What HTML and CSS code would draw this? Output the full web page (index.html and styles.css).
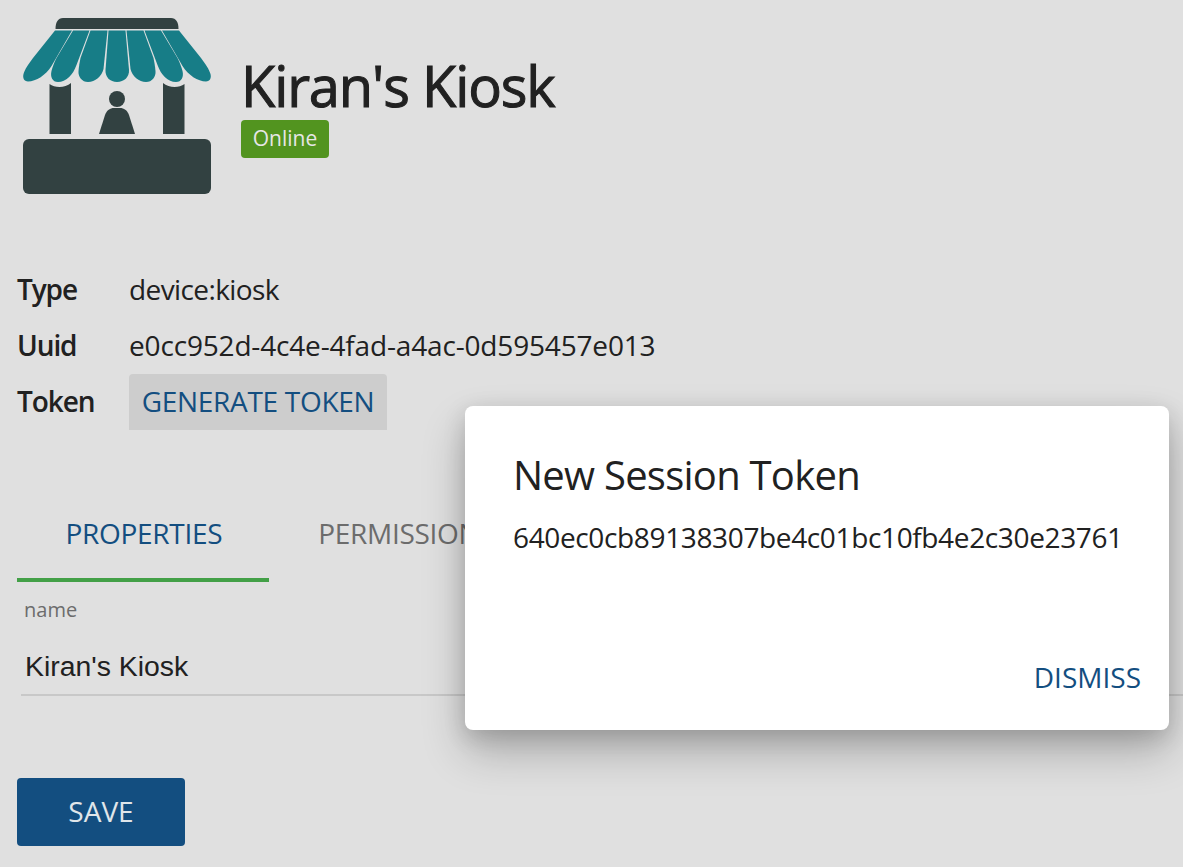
FILE: index.html
```html
<!DOCTYPE html>
<html lang="en">
<head>
  <meta charset="UTF-8">
  <meta name="viewport" content="width=device-width, initial-scale=1.0">
  <title>Kiran's Kiosk</title>
  <link rel="stylesheet" href="styles.css">
</head>
<body>

  <div class="page">
    <div class="head">
      <svg class="kiosk-icon" width="188" height="176" viewBox="23 18 188 176">
        <path class="dark" d="M55.5 29 C55.5 22 58 18 63 18 H171 C176 18 178.5 22 178.5 29 Z"/>
        <g class="teal">
          <g id="slats">
            <path d="M55 30.5 H72 L51.5 66 C46 75 36 81.5 28 81.5 C24 81.5 22.5 78 23.5 74 C25 69 28 65 33 58 Z"/>
            <path d="M73 30.5 H89.5 L76.5 65 C73 75 66 82 58 82 C52.5 82 50 77 51.5 71 C52.5 67 54 63 56.5 58 Z"/>
            <path d="M90.5 30.5 H107.5 L103.5 69 C102 76 95 82 88 82 C82 82 78 77 78.5 71 C79 66 79.5 63 80.5 58 Z"/>
          </g>
          <use href="#slats" transform="matrix(-1 0 0 1 234 0)"/>
          <path d="M108.5 30.5 H125.5 L129 70 C129.5 77 124 82 117 82 C110 82 105 77 105.5 70 Z"/>
        </g>
        <path class="dark" d="M49.5 84 C55 88 65 88 71 83 V134 H49.5 Z"/>
        <path class="dark" d="M163 83 C169 88 179 88 184.5 84 V134 H163 Z"/>
        <circle class="dark" cx="117" cy="99" r="8"/>
        <path class="dark" d="M99 134 L105 115 C107 110 110 108 114 108 H120 C124 108 127 110 129 115 L135 134 Z"/>
        <rect class="dark" x="23" y="139" width="188" height="55" rx="6"/>
      </svg>
      <div class="title-box">
        <h1 class="title">Kiran's Kiosk</h1>
        <span class="badge">Online</span>
      </div>
    </div>

    <div class="info">
      <div class="info-row"><span class="info-label">Type</span><span class="type-value">device:kiosk</span></div>
      <div class="info-row"><span class="info-label">Uuid</span><span class="uuid-value">e0cc952d-4c4e-4fad-a4ac-0d595457e013</span></div>
      <div class="info-row"><span class="info-label">Token</span><button class="btn-flat">GENERATE TOKEN</button></div>
    </div>

    <div class="tabs">
      <div class="tab tab-active">PROPERTIES</div>
      <div class="tab">PERMISSIONS</div>
    </div>

    <div class="field">
      <label class="field-label">name</label>
      <div class="field-input">Kiran's Kiosk</div>
    </div>

    <button class="btn-save">SAVE</button>
  </div>

  <div class="dialog">
    <h2 class="dialog-title">New Session Token</h2>
    <div class="dialog-text">640ec0cb89138307be4c01bc10fb4e2c30e23761</div>
    <div class="dialog-actions"><span class="dismiss">DISMISS</span></div>
  </div>

</body>
</html>
```

FILE: styles.css
```css
html, body {
  margin: 0;
  height: 100%;
  overflow: hidden;
}
body {
  background: #e0e0e0;
  color: #212121;
  font-family: "Open Sans", "Noto Sans", sans-serif;
  font-size: 28px;
}
button {
  font-family: inherit;
  border: 0;
}
.page {
  height: 867px;
  box-sizing: border-box;
  padding-top: 18px;
}

/* header */
.head {
  display: flex;
  align-items: flex-start;
  padding-left: 23px;
}
.kiosk-icon {
  display: block;
}
.kiosk-icon .dark {
  fill: #324141;
}
.kiosk-icon .teal {
  fill: #177d87;
}
.title-box {
  margin: 32px 0 0 30px;
}
.title {
  margin: 0;
  font-size: 56px;
  font-weight: 400;
  -webkit-text-stroke: 1px #212121;
  letter-spacing: -1.15px;
  line-height: 70px;
}
.badge {
  display: block;
  width: 88px;
  height: 38px;
  line-height: 36px;
  text-align: center;
  border-radius: 4px;
  background: #52941f;
  color: #e6e6e6;
  font-size: 21px;
}

/* info rows */
.info {
  margin-top: 68px;
  padding-left: 17px;
}
.info-row {
  display: flex;
  align-items: center;
  height: 56px;
}
.info-label {
  width: 112px;
  margin-top: -2px;
  font-weight: 600;
  letter-spacing: -1.1px;
}
.type-value {
  margin-top: -2px;
  letter-spacing: -.6px;
}
.uuid-value {
  margin-top: -2px;
  letter-spacing: -.17px;
}
.btn-flat {
  height: 56px;
  width: 258px;
  padding: 0 0 2px;
  background: #cdcdcd;
  color: #134e80;
  font-size: 28px;
  letter-spacing: -.3px;
  border-radius: 4px 4px 0 0;
}

/* tabs */
.tabs {
  display: flex;
  gap: 1px;
  margin: 76px 0 0 17px;
}
.tab {
  padding: 0 46.5px 0 48.5px;
  height: 72px;
  line-height: 54px;
  text-align: center;
  color: #6c6c6c;
  letter-spacing: -.3px;
}
.tab-active {
  color: #134e80;
  border-bottom: 4px solid #43a047;
}

/* form */
.field {
  margin-left: 21px;
  border-bottom: 2px solid #c8c8c8;
  height: 113px;
  margin-top: -1px;
}
.field-label {
  display: block;
  padding: 15px 0 0 3px;
  font-size: 20px;
  line-height: 28px;
  color: #6c6c6c;
}
.field-input {
  padding: 22px 0 0 4px;
  font-family: "Liberation Sans", sans-serif;
  font-size: 28.4px;
  line-height: 40px;
}
.btn-save {
  display: block;
  margin: 82px 0 0 17px;
  padding: 0 0 2px;
  width: 168px;
  height: 68px;
  border-radius: 4px;
  background: #134e80;
  color: #e0e6ea;
  font-size: 28px;
}

/* dialog over the page */
.dialog {
  position: absolute;
  left: 465px;
  top: 406px;
  width: 704px;
  height: 324px;
  box-sizing: border-box;
  background: #fff;
  border-radius: 8px;
  box-shadow: 0 22px 44px rgba(0, 0, 0, .24), 0 6px 22px rgba(0, 0, 0, .15);
  padding: 46px 28px 0 48px;
}
.dialog-title {
  margin: 0;
  font-size: 40px;
  font-weight: 400;
  letter-spacing: -.75px;
  line-height: 46px;
}
.dialog-text {
  margin-top: 21px;
  line-height: 36px;
  letter-spacing: -.36px;
}
.dialog-actions {
  margin-top: 103px;
  text-align: right;
}
.dismiss {
  color: #134e80;
}
```
